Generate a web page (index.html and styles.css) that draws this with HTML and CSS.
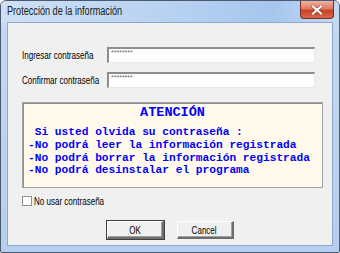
FILE: index.html
```html
<!DOCTYPE html>
<html lang="es">
<head>
    <meta charset="UTF-8">
    <meta name="viewport" content="width=device-width, initial-scale=1.0">
    <title>Protección de la información</title>
    <link rel="stylesheet" href="styles.css">
</head>
<body>
    <div class="window">
        <div class="titlebar">
            <span class="title squeeze">Protección de la información</span>
            <div class="close-btn">
                <svg width="12" height="10" viewBox="0 0 12 10">
                    <path d="M2 1.5 L10 8.5 M10 1.5 L2 8.5" stroke="#5a1a10" stroke-width="3.6" stroke-linecap="square" opacity="0.45"/>
                    <path d="M2 1.5 L10 8.5 M10 1.5 L2 8.5" stroke="#ffffff" stroke-width="2.2" stroke-linecap="square"/>
                </svg>
            </div>
        </div>

        <div class="client">
            <div class="field-row">
                <div class="field-label"><span class="squeeze">Ingresar contraseña</span></div>
                <div class="textbox">********</div>
            </div>
            <div class="field-row">
                <div class="field-label"><span class="squeeze">Confirmar contraseña</span></div>
                <div class="textbox">********</div>
            </div>

            <div class="notice">
                <div class="notice-title">ATENCIÓN</div>
<pre class="notice-text"> Si usted olvida su contraseña :
-No podrá leer la información registrada
-No podrá borrar la información registrada
-No podrá desinstalar el programa</pre>
            </div>

            <div class="check-row">
                <span class="checkbox"></span>
                <span class="squeeze">No usar contraseña</span>
            </div>

            <div class="button-container">
                <button class="btn btn-default"><span class="squeeze center">OK</span></button>
                <button class="btn"><span class="squeeze center">Cancel</span></button>
            </div>
        </div>
    </div>
</body>
</html>
```

FILE: styles.css
```css
* {
    box-sizing: border-box;
    margin: 0;
    padding: 0;
}

body {
    width: 340px;
    height: 253px;
    overflow: hidden;
    background: #ffffff;
    font-family: "Liberation Sans", Arial, sans-serif;
    font-size: 11px;
    color: #000;
}

/* the dialog font is a narrow one, none is installed, so squeeze Arial */
.squeeze {
    display: inline-block;
    white-space: nowrap;
    transform: scaleX(0.73);
    transform-origin: left center;
}

.squeeze.center {
    transform-origin: center center;
}

.window {
    width: 340px;
    height: 253px;
    border: 1px solid #4c5a6e;
    border-radius: 6px 6px 2px 2px;
    background: linear-gradient(180deg, #d7e5f7 0%, #c2d7f1 12%, #b6cfee 100%);
    display: flex;
    flex-direction: column;
}

.titlebar {
    height: 21px;
    display: flex;
    align-items: flex-start;
    justify-content: space-between;
    padding-left: 6px;
    background: linear-gradient(90deg, #cfe0f5 0%, #b5d0f1 55%, #a6c6ee 80%, #c4d9f3 100%);
    border-radius: 5px 5px 0 0;
}

.title {
    font-size: 12px;
    line-height: 20px;
    color: #1a1a1a;
    transform: scaleX(0.76);
}

.close-btn {
    width: 34px;
    height: 18px;
    margin-right: 5px;
    border: 1px solid #7a2f24;
    border-top: none;
    border-radius: 0 0 4px 4px;
    background: linear-gradient(180deg, #eeb2a2 0%, #df7a61 45%, #c9432a 55%, #d8664a 100%);
    display: flex;
    align-items: center;
    justify-content: center;
}

.client {
    flex: 1;
    margin: 0 6px 6px 6px;
    background: #f0f0f0;
    border: 1px solid #8ea8c9;
}

.field-row {
    display: flex;
    align-items: center;
    padding-left: 14px;
    margin-top: 9px;
}

.field-row:first-child {
    margin-top: 24px;
}

.field-label {
    width: 85px;
    flex-shrink: 0;
}

.textbox {
    width: 208px;
    height: 16px;
    background: #ffffff;
    border-style: solid;
    border-width: 2px 1px 1px 2px;
    border-color: #8d8d8d #e9e9e9 #e9e9e9 #8d8d8d;
    font-size: 7px;
    line-height: 8px;
    color: #6a6a6a;
    padding-left: 2px;
}

.notice {
    margin: 14px 0 0 14px;
    width: 301px;
    height: 86px;
    background: #fffaeb;
    border: 1px solid #a3a3a3;
    box-shadow: inset 1px 1px 0 #8f8f8f;
    color: #0000ff;
    font-family: "Liberation Mono", monospace;
    font-weight: bold;
}

.notice-title {
    text-align: center;
    font-size: 13.5px;
    line-height: 14px;
    margin-top: 3px;
}

.notice-text {
    font-family: "Liberation Mono", monospace;
    font-size: 11.2px;
    line-height: 12.8px;
    margin: 6px 0 0 5px;
}

.check-row {
    display: flex;
    align-items: center;
    padding-left: 14px;
    margin-top: 6px;
    height: 13px;
}

.checkbox {
    width: 10px;
    height: 10px;
    flex-shrink: 0;
    background: #ffffff;
    border: 1px solid #8e8f8f;
    margin-right: 2px;
}

.button-container {
    display: flex;
    justify-content: center;
    gap: 13px;
    margin-top: 14px;
}

.btn {
    width: 57px;
    height: 18px;
    font-family: "Liberation Sans", Arial, sans-serif;
    font-size: 11px;
    color: #000;
    background: #f0f0f0;
    border-style: solid;
    border-width: 1px 2px 2px 1px;
    border-color: #ffffff #6d6d6d #6d6d6d #ffffff;
    box-shadow: inset -1px -1px 0 #a0a0a0;
}

.btn-default {
    outline: 1px solid #404040;
}
```
